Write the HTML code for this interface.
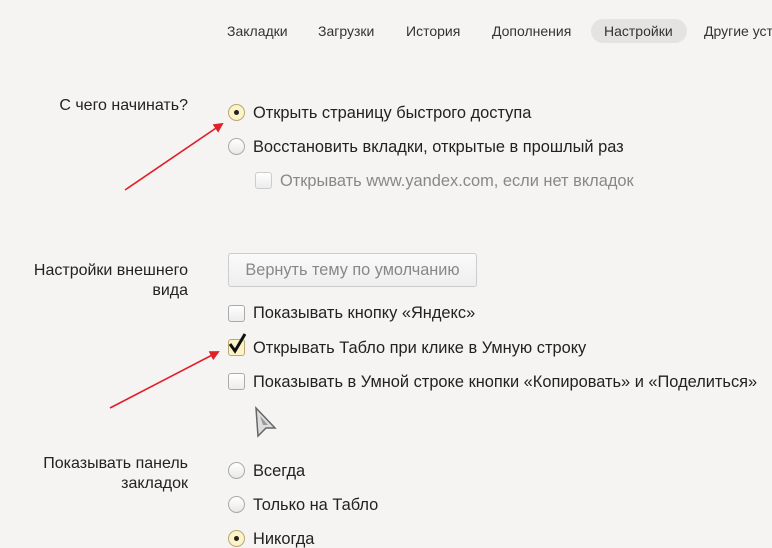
<!DOCTYPE html><html><head><meta charset="utf-8"><style>
html{overflow:hidden}
body{margin:0;width:772px;height:548px;background:#f5f4f2;font-family:"Liberation Sans",sans-serif;color:#222;position:relative;overflow:hidden}
.a{position:absolute;white-space:nowrap}
.n{font-size:14px;top:23px;color:#333}
.t{font-size:16.4px;left:253px;margin-top:1px}
.l{font-size:16px;right:584px;text-align:right;line-height:20px}
.r{position:absolute;width:15px;height:15px;border:1px solid #aaa;border-radius:50%;background:linear-gradient(#fff,#e8e8e8);left:228px}
.r.on{background:#fdf3c8;border-color:#b9a870}
.r.on::after{content:"";position:absolute;left:5px;top:5px;width:5px;height:5px;border-radius:50%;background:#222}
.c{position:absolute;width:15px;height:15px;border:1px solid #aaa;border-radius:3px;background:linear-gradient(#fff,#ececec);left:228px}
</style></head><body>
<div class="a n" style="left:227px">Закладки</div>
<div class="a n" style="left:318px">Загрузки</div>
<div class="a n" style="left:406px">История</div>
<div class="a n" style="left:492px">Дополнения</div>
<div class="a" style="left:591px;top:19px;width:96px;height:24px;border-radius:12px;background:#e4e3e1"></div>
<div class="a n" style="left:604px">Настройки</div>
<div class="a n" style="left:704px;width:68px;overflow:hidden">Другие уст</div>

<div class="a l" style="top:96px">С чего начинать?</div>
<div class="r on" style="top:104px"></div><div class="a t" style="top:103px">Открыть страницу быстрого доступа</div>
<div class="r" style="top:138px"></div><div class="a t" style="top:137px">Восстановить вкладки, открытые в прошлый раз</div>
<div class="c" style="left:255px;top:172px;border-color:#ccc"></div><div class="a t" style="left:280px;top:171px;color:#888">Открывать www.yandex.com, если нет вкладок</div>

<div class="a l" style="top:261px">Настройки внешнего<br>вида</div>
<div class="a" style="left:228px;top:253px;width:249px;height:34px;border:1px solid #ccc;border-radius:3px;background:linear-gradient(#fafafa,#eee);box-sizing:border-box;color:#888;font-size:16.3px;line-height:33px;text-align:center">Вернуть тему по умолчанию</div>
<div class="c" style="top:305px"></div><div class="a t" style="top:303px">Показывать кнопку «Яндекс»</div>
<div class="c" style="top:339px;background:#fdf3c8;border-color:#b9a870"></div>
<svg class="a" style="left:226px;top:332px" width="22" height="24"><path d="M4 12 L9 19 L19 2" fill="none" stroke="#111" stroke-width="3"/></svg>
<div class="a t" style="top:338px">Открывать Табло при клике в Умную строку</div>
<div class="c" style="top:373px"></div><div class="a t" style="top:372px">Показывать в Умной строке кнопки «Копировать» и «Поделиться»</div>
<svg class="a" style="left:254px;top:406px" width="24" height="32"><path d="M2 2 L21 22 L12 22 L4 30 Z" fill="#ddd" stroke="#666" stroke-width="1.5"/><path d="M6 10 L14 19 L9 19 Z" fill="#999"/></svg>

<div class="a l" style="top:454px">Показывать панель<br>закладок</div>
<div class="r" style="top:462px"></div><div class="a t" style="top:461px">Всегда</div>
<div class="r" style="top:496px"></div><div class="a t" style="top:495px">Только на Табло</div>
<div class="r on" style="top:530px"></div><div class="a t" style="top:529px">Никогда</div>

<svg class="a" style="left:0;top:0" width="772" height="548"><defs><marker id="m" markerWidth="10" markerHeight="10" refX="8" refY="5" orient="auto" markerUnits="userSpaceOnUse"><path d="M0 0 L10 5 L0 10 Z" fill="#e0202a"/></marker></defs>
<line x1="125" y1="190" x2="222" y2="124" stroke="#e0202a" stroke-width="1.6" marker-end="url(#m)"/>
<line x1="110" y1="408" x2="218" y2="352" stroke="#e0202a" stroke-width="1.6" marker-end="url(#m)"/></svg>
</body></html>
